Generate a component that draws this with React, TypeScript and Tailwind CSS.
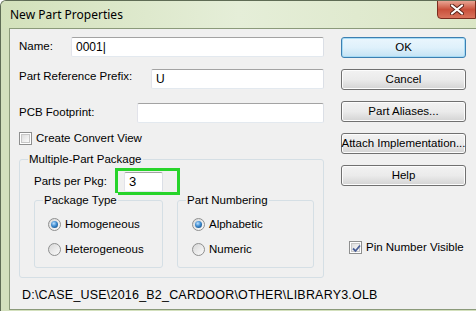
import React from "react";

const ui = { fontFamily: '"Liberation Sans", Arial, sans-serif' };

function TextBox({ value, className }: { value?: string; className: string }) {
  return (
    <div
      className={`h-[20px] bg-white border border-[#abadb3] border-t-[#a3a3a3] border-l-[#e2e3ea] border-r-[#dbdfe6] border-b-[#e3e9ef] rounded-[2px] flex items-center pl-[4px] text-[12px] text-black ${className}`}
    >
      {value}
    </div>
  );
}

function Button({ label, primary }: { label: string; primary?: boolean }) {
  return (
    <div
      className={`h-[21px] w-[125px] rounded-[3px] border flex items-center justify-center whitespace-nowrap text-[11.5px] text-black ${
        primary
          ? "border-[#3c7fb1] bg-gradient-to-b from-[#eaf6fd] via-[#dff1fb] to-[#c4e3f4] shadow-[inset_0_0_0_1px_#a6dbf5]"
          : "border-[#707070] bg-gradient-to-b from-[#f2f2f2] via-[#ebebeb] to-[#d3d3d3] shadow-[inset_0_0_0_1px_#fcfcfc]"
      }`}
    >
      {label}
    </div>
  );
}

function Check({ checked }: { checked?: boolean }) {
  return (
    <div className="w-[13px] h-[13px] border border-[#8e8f8f] bg-white p-[1px] shrink-0">
      <div className="w-full h-full border border-[#c7c7c7] bg-gradient-to-br from-[#dedede] to-[#fbfbfb] relative">
        {checked && (
          <svg viewBox="0 0 9 9" className="absolute inset-0 w-[9px] h-[9px]">
            <path d="M1 4.5 L3.5 7 L8 1.5" fill="none" stroke="#4a5f97" strokeWidth="1.8" />
          </svg>
        )}
      </div>
    </div>
  );
}

function Radio({ on, label }: { on?: boolean; label: string }) {
  return (
    <div className="flex items-center gap-[4px] h-[14px] leading-[14px]">
      <div className="w-[13px] h-[13px] shrink-0 rounded-full border border-[#8e8f8f] bg-gradient-to-br from-[#d8d8d8] to-[#fbfbfb] flex items-center justify-center">
        {on && (
          <div className="w-[7px] h-[7px] rounded-full bg-[radial-gradient(circle_at_40%_35%,#bfe2ff_0%,#3d8bd0_45%,#0d3b6b_100%)]" />
        )}
      </div>
      <span className="text-[11.5px] text-black">{label}</span>
    </div>
  );
}

function Group({ title, className, children }: { title: string; className: string; children?: React.ReactNode }) {
  return (
    <div className={`relative border border-[#d5dfe5] rounded-[3px] ${className}`}>
      <span className="absolute -top-[8px] left-[8px] px-[1px] bg-[#f0f0f0] text-[11.5px] leading-[14px] text-black whitespace-nowrap">
        {title}
      </span>
      {children}
    </div>
  );
}

export default function App() {
  return (
    <div
      className="w-[476px] h-[311px] overflow-hidden bg-[#d3e0bd] relative rounded-tl-[6px] border-l border-t border-[#5f6c55]"
      style={ui}
    >
      {/* title bar */}
      <div className="h-[27px] flex items-center pl-[9px] bg-gradient-to-r from-[#d3e1bb] via-[#e5eed8] to-[#dbe6c6]">
        <span className="text-[12px] text-black" style={{ fontFamily: '"Noto Sans", "Open Sans", sans-serif' }}>
          New Part Properties
        </span>
      </div>
      <div className="absolute top-[-1px] right-0 w-[39px] h-[19px] rounded-bl-[4px] border border-[#7a2c1e] bg-gradient-to-b from-[#e8a493] via-[#c9503b] to-[#d9735c] flex items-center justify-center">
        <svg viewBox="0 0 14 11" className="w-[14px] h-[11px]">
          <path d="M2 1.5 L12 9.5 M12 1.5 L2 9.5" stroke="#5b2218" strokeWidth="4" strokeLinecap="round" />
          <path d="M2 1.5 L12 9.5 M12 1.5 L2 9.5" stroke="#ffffff" strokeWidth="2.2" strokeLinecap="round" />
        </svg>
      </div>

      {/* client area */}
      <div className="ml-[8px] h-[282px] bg-[#f0f0f0] border-l border-t border-b border-[#8b9a7a] flex text-[11.5px] text-black">
        {/* left side */}
        <div className="w-[323px] pl-[9px] flex flex-col">
          <div className="flex items-center mt-[7px] h-[21px]">
            <span className="w-[52px]">Name:</span>
            <TextBox value="0001|" className="w-[253px]" />
          </div>
          <div className="flex items-center mt-[11px] h-[21px]">
            <span className="w-[132px] -mt-[4px]">Part Reference Prefix:</span>
            <TextBox value="U" className="w-[173px]" />
          </div>
          <div className="flex items-center mt-[13px] h-[21px]">
            <span className="w-[118px]">PCB Footprint:</span>
            <TextBox className="w-[187px]" />
          </div>
          <div className="flex items-center gap-[4px] mt-[8px] h-[15px]">
            <Check />
            <span>Create Convert View</span>
          </div>

          <Group title="Multiple-Part Package" className="mt-[13px] w-[305px] h-[119px] pt-[11px] pl-[14px]">
            <div className="flex items-center h-[21px]">
              <span className="w-[90px] shrink-0">Parts per Pkg:</span>
              <TextBox value="3" className="w-[39px] shrink-0 text-[13px]" />
            </div>
            <div className="absolute left-[95px] top-[8px] w-[65px] h-[27px] border-[3px] border-[#27d42a]" />
            <div className="flex mt-[8px]">
              <Group title="Package Type" className="w-[129px] h-[68px] pt-[16px] pl-[13px] flex flex-col gap-[11px]">
                <Radio on label="Homogeneous" />
                <Radio label="Heterogeneous" />
              </Group>
              <Group title="Part Numbering" className="ml-[14px] w-[137px] h-[68px] pt-[16px] pl-[14px] flex flex-col gap-[11px]">
                <Radio on label="Alphabetic" />
                <Radio label="Numeric" />
              </Group>
            </div>
          </Group>

          <div className="mt-[8px] pl-[3px] text-[12.5px] tracking-[0.2px] whitespace-nowrap">
            D:\CASE_USE\2016_B2_CARDOOR\OTHER\LIBRARY3.OLB
          </div>
        </div>

        {/* right side */}
        <div className="pl-[8px] pt-[8px] flex flex-col gap-[11px]">
          <Button label="OK" primary />
          <Button label="Cancel" />
          <Button label="Part Aliases..." />
          <Button label="Attach Implementation..." />
          <Button label="Help" />
          <div className="flex items-center gap-[4px] mt-[42px] ml-[8px]">
            <Check checked />
            <span className="whitespace-nowrap">Pin Number Visible</span>
          </div>
        </div>
      </div>
    </div>
  );
}
